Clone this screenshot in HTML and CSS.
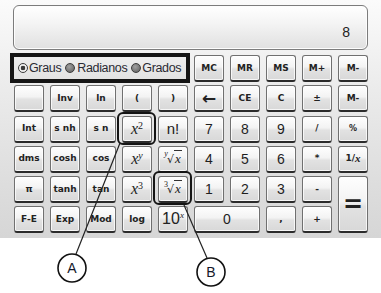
FILE: index.html
```html
<!DOCTYPE html>
<html lang="pt">
<head>
<meta charset="utf-8">
<title>Calculadora</title>
<link rel="stylesheet" href="styles.css">
</head>
<body>
<div class="calc">
  <div class="display"><span class="value">8</span></div>
  <div class="keys">
    <div class="radios">
      <span class="radio on"></span><span class="rl">Graus</span>
      <span class="radio"></span><span class="rl">Radianos</span>
      <span class="radio"></span><span class="rl">Grados</span>
    </div>
    <div class="k">MC</div>
    <div class="k">MR</div>
    <div class="k">MS</div>
    <div class="k">M+</div>
    <div class="k">M-</div>

    <div class="k"></div>
    <div class="k">Inv</div>
    <div class="k">ln</div>
    <div class="k">(</div>
    <div class="k">)</div>
    <div class="k arrow">&#x2190;</div>
    <div class="k">CE</div>
    <div class="k">C</div>
    <div class="k">±</div>
    <div class="k">M-</div>

    <div class="k">Int</div>
    <div class="k">s nh</div>
    <div class="k">s n</div>
    <div class="k m hl"><i>x</i><sup>2</sup></div>
    <div class="k big">n!</div>
    <div class="k d">7</div>
    <div class="k d">8</div>
    <div class="k d">9</div>
    <div class="k">/</div>
    <div class="k sm">%</div>

    <div class="k">dms</div>
    <div class="k">cosh</div>
    <div class="k">cos</div>
    <div class="k m"><i>x</i><sup><i>y</i></sup></div>
    <div class="k m"><span class="rad"><sup><i>y</i></sup><span class="rs">√</span><i class="ov">x</i></span></div>
    <div class="k d">4</div>
    <div class="k d">5</div>
    <div class="k d">6</div>
    <div class="k">*</div>
    <div class="k">1/<i class="ix">x</i></div>

    <div class="k">π</div>
    <div class="k">tanh</div>
    <div class="k">tan</div>
    <div class="k m"><i>x</i><sup>3</sup></div>
    <div class="k m hl hl2"><span class="rad"><sup>3</sup><span class="rs">√</span><i class="ov">x</i></span></div>
    <div class="k d">1</div>
    <div class="k d">2</div>
    <div class="k d">3</div>
    <div class="k">-</div>
    <div class="k eq">=</div>

    <div class="k">F-E</div>
    <div class="k">Exp</div>
    <div class="k">Mod</div>
    <div class="k">log</div>
    <div class="k ten">10<sup><i>x</i></sup></div>
    <div class="k d zero">0</div>
    <div class="k">,</div>
    <div class="k">+</div>
  </div>
</div>
<svg class="callouts" width="381" height="293" viewBox="0 0 381 293">
  <line x1="120" y1="143" x2="76" y2="254" />
  <line x1="184" y1="205" x2="207" y2="258" />
  <circle cx="72" cy="268" r="14" />
  <circle cx="211" cy="272" r="14" />
  <text x="72" y="273">A</text>
  <text x="211" y="277">B</text>
</svg>
</body>
</html>
```

FILE: styles.css
```css
html, body {
  margin: 0;
  padding: 0;
  background: #fff;
}

body {
  width: 381px;
  height: 293px;
  position: relative;
  overflow: hidden;
  font-family: "Liberation Sans", Arial, sans-serif;
}

.calc {
  box-sizing: border-box;
  height: 238px;
  padding: 5px 13px 0 14px;
  background: linear-gradient(#fbfbfb 0%, #ececec 35%, #dedede 75%, #d6d6d6 100%);
}

.display {
  box-sizing: border-box;
  width: 355px;
  height: 45px;
  margin-left: -1px;
  border: 1px solid #7c7c7c;
  border-radius: 6px;
  background: linear-gradient(#ffffff 0%, #f4f4f4 40%, #e0e0e0 100%);
  box-shadow: inset 0 0 0 1px #fdfdfd;
  display: flex;
  justify-content: flex-end;
  align-items: center;
  padding: 8px 17px 0 0;
}

.value {
  font: 14px "Liberation Sans", Arial, sans-serif;
  color: #222;
}

.keys {
  margin-top: 5px;
  display: grid;
  grid-template-columns: repeat(10, 30px);
  grid-auto-rows: 27px;
  column-gap: 6px;
  row-gap: 3.25px;
}

.radios {
  grid-column: 1 / 6;
  margin: -2px -2px -1px -4px;
  border: 4px solid #151515;
  background: linear-gradient(#eeeeee, #e2e2e2);
  display: flex;
  align-items: center;
  padding-left: 4px;
  font: 12.5px "Liberation Sans", Arial, sans-serif;
  letter-spacing: -0.35px;
  color: #2a2a33;
}

.radio {
  box-sizing: border-box;
  width: 10px;
  height: 10px;
  border-radius: 50%;
  border: 1px solid #3c3c3c;
  background: radial-gradient(circle at 40% 35%, #a0a0a0, #5c5c5c);
  flex: none;
}

.radio.on {
  background: radial-gradient(circle, #3a3a3a 0 2px, #efefef 2.6px 100%);
}

.rl {
  margin-left: 1px;
  margin-right: 4px;
}

.rl:nth-child(4) {
  margin-left: 2px;
}

.k {
  box-sizing: border-box;
  position: relative;
  border: 1px solid #707070;
  border-bottom: 2px solid #2b2b2b;
  border-radius: 3px;
  background: linear-gradient(#fefefe 0%, #f3f3f3 45%, #e2e2e2 55%, #d8d8d8 100%);
  box-shadow: inset 0 0 0 1px rgba(255, 255, 255, 0.75);
  display: flex;
  align-items: center;
  justify-content: center;
  font: bold 9px "DejaVu Sans", sans-serif;
  color: #222;
  white-space: nowrap;
  line-height: 1;
}

.k.d {
  font: 14px "Liberation Sans", Arial, sans-serif;
  color: #1e1e1e;
}

.k.big {
  font: 15px "Liberation Sans", Arial, sans-serif;
}

.k.sm {
  font-size: 8px;
}

.k.arrow {
  font: bold 17px "DejaVu Sans", sans-serif;
}

.k.m {
  font: 16px "Liberation Serif", "Times New Roman", serif;
  color: #222;
}

.k.m i,
.k.ten i,
.ix {
  font-family: "Liberation Serif", "Times New Roman", serif;
  font-style: italic;
}

.k sup {
  font-size: 10px;
  position: relative;
  top: -3px;
  vertical-align: super;
  line-height: 0;
}

.rad {
  font-size: 13px;
}

.rad sup {
  font-size: 8px;
  top: -1px;
  margin-right: -1px;
}

.rs {
  font-family: "DejaVu Sans", sans-serif;
  font-size: 11px;
}

.ov {
  border-top: 1px solid #333;
  padding: 0 1px;
  line-height: 1;
}

.ix {
  font-size: 11px;
}

.k.ten {
  font: 16px "Liberation Sans", Arial, sans-serif;
}

.k.ten sup {
  font-size: 9px;
  top: -4px;
}

.k.eq {
  grid-row: span 2;
  font: bold 24px "DejaVu Sans", sans-serif;
}

.k.zero {
  grid-column: span 2;
}

.hl::after {
  content: "";
  position: absolute;
  inset: -5px -5px -4px -6px;
  border: 2.5px solid #151515;
  border-radius: 6px;
}

.hl2::after {
  inset: -6px -5px -4px -6px;
}

.callouts {
  position: absolute;
  top: 0;
  left: 0;
  pointer-events: none;
}

.callouts line {
  stroke: #222;
  stroke-width: 1.2;
}

.callouts circle {
  fill: #fff;
  stroke: #111;
  stroke-width: 1.6;
}

.callouts text {
  font: 14px "Liberation Sans", Arial, sans-serif;
  fill: #15182a;
  text-anchor: middle;
}
```
